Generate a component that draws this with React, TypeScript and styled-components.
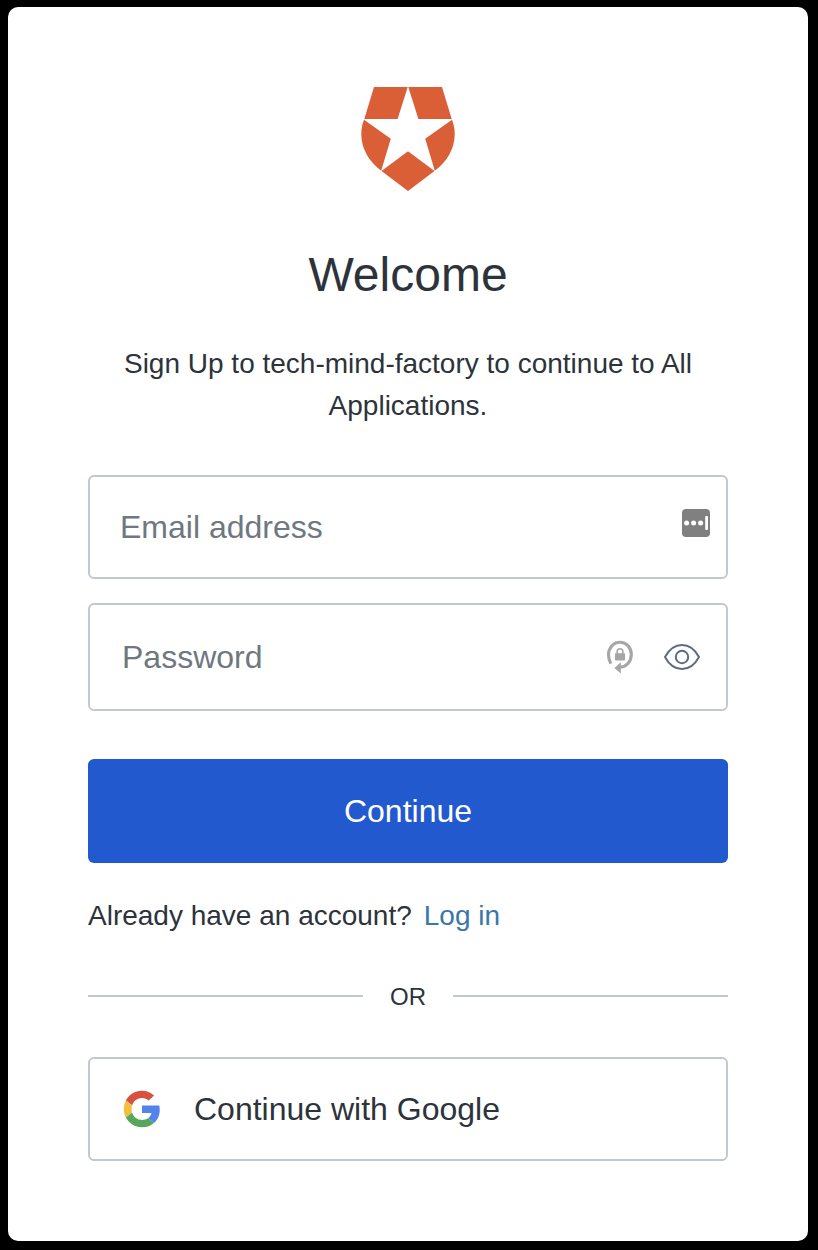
import React from "react";
import styled, { createGlobalStyle } from "styled-components";

const GlobalStyle = createGlobalStyle`
  *, *::before, *::after { box-sizing: border-box; }
  body {
    margin: 0;
    background: #000;
    color: #2d333a;
    font-family: "Liberation Sans", Arial, sans-serif;
  }
`;

const Page = styled.div`
  min-height: 1250px;
  padding: 7px 10px 9px 8px;
`;

const Card = styled.main`
  height: 1234px;
  padding: 80px;
  border-radius: 10px;
  background: #fff;
  display: flex;
  flex-direction: column;
`;

const Logo = styled.svg`
  display: block;
  width: 94px;
  height: 104px;
  align-self: center;
  flex: none;
`;

const Title = styled.h1`
  margin: 56px 0 0;
  font-size: 48px;
  line-height: 56px;
  font-weight: 400;
  text-align: center;
`;

const Subtitle = styled.p`
  margin: 40px 0 0;
  font-size: 28px;
  line-height: 42px;
  text-align: center;
`;

const Form = styled.form`
  display: flex;
  flex-direction: column;
  margin-top: 48px;
`;

const Field = styled.label<{ $height: number; $left: number; $right: number }>`
  display: flex;
  align-items: center;
  height: ${(p) => p.$height}px;
  padding: 0 ${(p) => p.$right}px 0 ${(p) => p.$left}px;
  border: 2px solid #c2c8d0;
  border-radius: 6px;

  & + & { margin-top: 24px; }
`;

const Input = styled.input`
  flex: 1;
  min-width: 0;
  height: 60px;
  padding: 0;
  border: 0;
  outline: 0;
  background: transparent;
  color: #2d333a;
  font: 32px "Liberation Sans", Arial, sans-serif;

  &::placeholder { color: #6f7780; opacity: 1; }
`;

const ManagerIcon = styled.svg`
  width: 28px;
  height: 28px;
  margin-bottom: 8px;
`;

const GenerateIcon = styled.svg`
  width: 28px;
  height: 34px;
`;

const EyeIcon = styled.svg`
  width: 38px;
  height: 28px;
  margin-left: 29px;
`;

const SubmitButton = styled.button`
  height: 104px;
  margin-top: 48px;
  padding: 0;
  border: 0;
  border-radius: 6px;
  background: #2359cf;
  color: #fff;
  font: 32px "Liberation Sans", Arial, sans-serif;
`;

const LoginLine = styled.p`
  display: flex;
  gap: 12px;
  margin: 32px 0 0;
  font-size: 28px;
  line-height: 42px;
`;

const LoginLink = styled.a`
  color: #3c76a9;
  text-decoration: none;
`;

const Divider = styled.div`
  display: flex;
  align-items: center;
  height: 36px;
  margin-top: 41px;
  font-size: 24px;

  &::before, &::after {
    content: "";
    flex: 1;
    height: 2px;
    background: #c2c8d0;
  }
`;

const DividerText = styled.span`
  width: 90px;
  padding-top: 2px;
  text-align: center;
`;

const GoogleButton = styled.button`
  display: flex;
  align-items: center;
  height: 104px;
  margin-top: 43px;
  padding: 0 32px;
  border: 2px solid #c2c8d0;
  border-radius: 6px;
  background: #fff;
  color: #2d333a;
  font: 32px "Liberation Sans", Arial, sans-serif;
`;

const GoogleIcon = styled.svg`
  width: 40px;
  height: 40px;
  margin-right: 32px;
`;

export default function App() {
  return (
    <>
      <GlobalStyle />
      <Page>
        <Card>
          <Logo viewBox="0 0 94 104" fill="#da5f36" aria-hidden="true">
            <path d="M13 0H46.7L36.6 32.1H3.3Z" />
            <path d="M81 0H47.3L57.4 32.1H90.7Z" />
            <path d="M3 32.8L29.8 51.8L20.2 83.7C7.5 74.5 0.3 61 0.3 47.3C0.3 42 1.2 37.2 3 32.8Z" />
            <path d="M91 32.8L64.2 51.8L73.8 83.7C86.5 74.5 93.7 61 93.7 47.3C93.7 42 92.8 37.2 91 32.8Z" />
            <path d="M47 64.3L73.5 84L47 104L20.5 84Z" />
          </Logo>
          <Title>Welcome</Title>
          <Subtitle>Sign Up to tech-mind-factory to continue to All Applications.</Subtitle>
          <Form onSubmit={(e) => e.preventDefault()}>
            <Field $height={104} $left={30} $right={16}>
              <Input type="email" placeholder="Email address" />
              <ManagerIcon viewBox="0 0 28 28" fill="#fff">
                <rect width="28" height="28" rx="4" fill="#808080" />
                <circle cx="4.6" cy="14" r="2.5" />
                <circle cx="11.6" cy="14" r="2.5" />
                <circle cx="18.6" cy="14" r="2.5" />
                <rect x="23.2" y="7" width="2.8" height="14" rx="1" />
              </ManagerIcon>
            </Field>
            <Field $height={108} $left={32} $right={25}>
              <Input type="password" placeholder="Password" />
              <GenerateIcon viewBox="0 0 28 34" fill="none">
                <path d="M5 23.6C3.4 21.3 2.5 18.3 2.5 14.8C2.5 7.8 7.5 2.3 14 2.3C20.4 2.3 25.3 7.8 25.3 14.4C25.3 21.4 20.6 26.6 14.2 27.2" stroke="#a6a6a6" strokeWidth="3.1" />
                <path d="M8.4 27.9L14.8 22.3V33.5Z" fill="#a6a6a6" />
                <rect x="9" y="13.2" width="10" height="7.4" rx="0.8" fill="#a6a6a6" />
                <path d="M11.2 14V11.5A2.8 2.8 0 0 1 16.8 11.5V14" stroke="#a6a6a6" strokeWidth="1.6" />
              </GenerateIcon>
              <EyeIcon viewBox="0 0 38 28" fill="none" stroke="#5f6b84" strokeWidth="2">
                <path d="M2 14C6.2 6.2 12.2 2 19 2S31.8 6.2 36 14C31.8 21.8 25.8 26 19 26S6.2 21.8 2 14Z" strokeLinejoin="round" />
                <circle cx="19" cy="14" r="6.2" />
              </EyeIcon>
            </Field>
            <SubmitButton type="submit">Continue</SubmitButton>
          </Form>
          <LoginLine>
            Already have an account?
            <LoginLink href="#">Log in</LoginLink>
          </LoginLine>
          <Divider>
            <DividerText>OR</DividerText>
          </Divider>
          <GoogleButton type="button">
            <GoogleIcon viewBox="0 0 40 40">
              <path d="M3.9 11.4C7 5.6 12.7 1.8 20 1.8C24.7 1.8 28.7 3.5 32 6.5L26.7 11.6C24.9 9.9 22.7 9 20 9C15.3 9 11.6 12 10.1 16.2Z" fill="#d85040" />
              <path d="M3.9 11.4L10.1 16.2C9.3 18.7 9.3 21.3 10.1 23.8L3.9 28.6C1.2 23.2 1.2 16.8 3.9 11.4Z" fill="#f2be42" />
              <path d="M3.9 28.6L10.1 23.8C11.6 28.1 15.3 31 20 31C22.3 31 24.4 30.4 26 29.3L32 34C28.9 36.8 24.8 38.3 20 38.3C12.7 38.3 7 34.4 3.9 28.6Z" fill="#58a55c" />
              <path d="M20 16.5H37.3C38.8 24 36.5 30.2 32 34L26 29.3C27.8 28.1 29.1 26.2 29.5 24H20Z" fill="#5383ec" />
            </GoogleIcon>
            Continue with Google
          </GoogleButton>
        </Card>
      </Page>
    </>
  );
}
